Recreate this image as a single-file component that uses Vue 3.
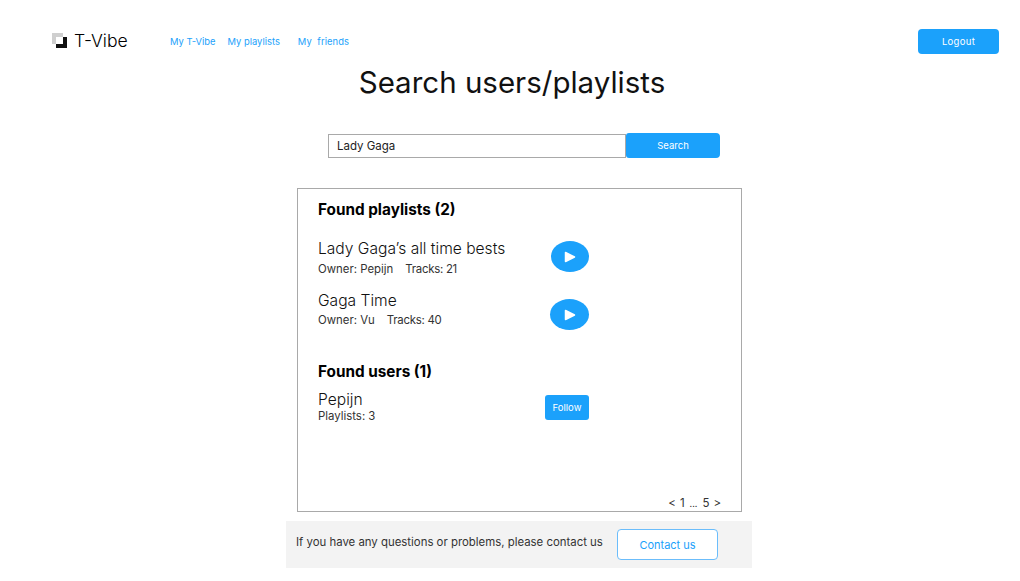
<template>
  <div class="page">
    <header class="topbar">
      <div class="brand">
        <svg class="brand-logo" width="15" height="15" viewBox="0 0 15 15">
          <rect x="0" y="0" width="11" height="11" fill="#cfcfcf" />
          <rect x="4" y="4" width="7" height="7" fill="#fff" />
          <path d="M11 4h4v11H4v-4h7z" fill="#111" />
        </svg>
        <span class="brand-name">T-Vibe</span>
      </div>
      <nav class="nav">
        <a v-for="link in links" :key="link" class="nav-link">{{ link }}</a>
      </nav>
      <button class="logout">Logout</button>
    </header>

    <h1 class="title">Search users/playlists</h1>

    <div class="search">
      <div class="search-input">Lady Gaga</div>
      <button class="search-btn">Search</button>
    </div>

    <section class="results">
      <h2 class="heading">Found playlists (2)</h2>
      <div v-for="p in playlists" :key="p.name" class="playlist" :class="p.cls">
        <div class="playlist-text">
          <div class="item-name">{{ p.name }}</div>
          <div class="item-meta">
            <span>Owner: {{ p.owner }}</span>
            <span class="tracks">Tracks: {{ p.tracks }}</span>
          </div>
        </div>
        <button class="play">
          <svg width="12" height="12" viewBox="0 0 12 12">
            <path d="M1.5 1.5 10.5 6 1.5 10.5z" fill="#fff" stroke="#fff" stroke-width="1.5" stroke-linejoin="round" />
          </svg>
        </button>
      </div>

      <h2 class="heading users-heading">Found users (1)</h2>
      <div class="user">
        <div class="user-text">
          <div class="item-name">Pepijn</div>
          <div class="item-meta">Playlists: 3</div>
        </div>
        <button class="follow">Follow</button>
      </div>

      <div class="pager">
        <span>&lt;</span><span>1</span><span class="dots">...</span><span>5</span><span>&gt;</span>
      </div>
    </section>

    <footer class="contact">
      <span class="contact-text">If you have any questions or problems, please contact us</span>
      <button class="contact-btn">Contact us</button>
    </footer>
  </div>
</template>

<script setup>
const links = ['My T-Vibe', 'My playlists', 'My  friends']

const playlists = [
  { name: 'Lady Gaga’s all time bests', owner: 'Pepijn', tracks: 21, cls: 'first' },
  { name: 'Gaga Time', owner: 'Vu', tracks: 40, cls: 'second' },
]
</script>

<style>
html, body { background: #fff; }
</style>

<style scoped>
.page {
  width: 1020px;
  height: 581px;
  overflow: hidden;
  display: flex;
  flex-direction: column;
  font-family: Inter, "Open Sans", sans-serif;
  color: #111;
}

button {
  font-family: inherit;
  border: none;
  cursor: pointer;
}

.topbar {
  width: 100%;
  box-sizing: border-box;
  height: 54px;
  padding: 29px 21px 0 52px;
  display: flex;
  align-items: flex-start;
}

.brand {
  display: flex;
  align-items: center;
  gap: 7px;
  height: 24px;
  width: 118px;
}
.brand-logo { margin-top: -2px; }
.brand-name { font-size: 17.6px; font-weight: 300; color: #000; margin-top: -2px; }

.nav {
  display: flex;
  height: 24px;
  align-items: center;
  flex: 1;
}
.nav-link {
  font-size: 9.4px;
  color: #1ba1fb;
  white-space: pre;
}
.nav-link:nth-child(2) { margin-left: 12px; }
.nav-link:nth-child(3) { margin-left: 18px; letter-spacing: 0.1px; }

.logout {
  width: 81px;
  height: 25px;
  background: #1ba1fb;
  color: #fff;
  border-radius: 4px;
  font-size: 9.5px;
  letter-spacing: 0.3px;
}

.title {
  margin: 11px 0 0;
  height: 35px;
  line-height: 35px;
  text-align: center;
  padding-left: 4px;
  font-size: 29.5px;
  font-weight: 400;
  color: #111;
}

.search {
  display: flex;
  align-items: flex-start;
  margin: 33px 0 0 328px;
  width: 392px;
  height: 25px;
}
.search-input {
  width: 298px;
  height: 24px;
  margin-top: 1px;
  box-sizing: border-box;
  border: 1px solid #a9a9a9;
  padding-left: 8px;
  line-height: 22px;
  font-size: 11.5px;
  color: #222;
}
.search-btn {
  flex: 1;
  height: 25px;
  background: #1ba1fb;
  color: #fff;
  font-size: 9.5px;
  border-radius: 3px 4px 4px 3px;
}

.results {
  position: relative;
  margin: 30px 0 0 297px;
  width: 445px;
  height: 324px;
  box-sizing: border-box;
  border: 1px solid #a9a9a9;
  padding: 12px 20px 0;
}

.heading {
  margin: 0;
  font-size: 15.3px;
  line-height: 18px;
  font-weight: 700;
  color: #000;
}

.playlist {
  display: flex;
  align-items: flex-start;
  width: 271px;
  justify-content: space-between;
}
.playlist.first { margin-top: 20px; height: 52px; }
.playlist.second { height: 45px; }

.item-name {
  font-size: 15.6px;
  line-height: 20px;
  font-weight: 300;
  color: #111;
}
.item-meta {
  font-size: 11.4px;
  line-height: 14px;
  color: #333;
  display: flex;
  gap: 12px;
}
.tracks { letter-spacing: -0.25px; }
.first .item-meta { margin-top: 3px; }
.second .item-meta { margin-top: 2px; }

.play {
  width: 38px;
  height: 31px;
  border-radius: 50%;
  background: #1ba1fb;
  display: flex;
  align-items: center;
  justify-content: center;
  padding: 0;
}
.first .play { margin-top: 2px; }
.second .play { margin-top: 8px; width: 39px; }

.users-heading { margin-top: 27px; }

.user {
  display: flex;
  justify-content: space-between;
  align-items: flex-start;
  width: 271px;
  margin-top: 9px;
}
.user .item-meta { margin-top: -1px; }

.follow {
  width: 44px;
  height: 25px;
  background: #1ba1fb;
  color: #fff;
  border-radius: 3px;
  font-size: 9.5px;
  padding: 0;
  margin-top: 5px;
}

.pager {
  position: absolute;
  right: 20px;
  bottom: 1px;
  display: flex;
  align-items: baseline;
  gap: 4px;
  font-size: 11.5px;
  color: #333;
}
.dots { font-size: 9px; margin: 0 1px; }

.contact {
  margin: 9px 0 0 286px;
  width: 466px;
  height: 47px;
  box-sizing: border-box;
  background: #f3f3f3;
  padding-left: 10px;
  display: flex;
  align-items: center;
}
.contact-text {
  font-size: 11.4px;
  color: #333;
  width: 321px;
  white-space: nowrap;
  margin-top: -5px;
}
.contact-btn {
  width: 101px;
  height: 31px;
  background: #fff;
  border: 1px solid #6bbdfb;
  border-radius: 4px;
  color: #1ba1fb;
  font-size: 11px;
}
</style>
